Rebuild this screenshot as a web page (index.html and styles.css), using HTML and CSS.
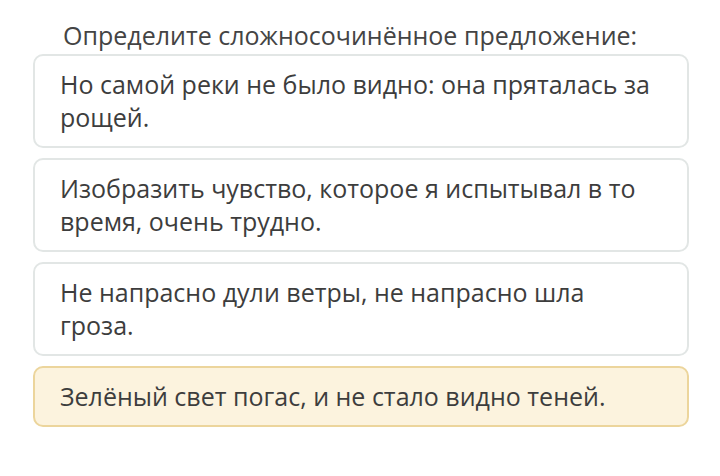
FILE: index.html
```html
<!DOCTYPE html>
<html lang="ru">
<head>
<meta charset="utf-8">
<link rel="stylesheet" href="styles.css">
</head>
<body>
<div class="quiz">
  <div class="question">Определите сложносочинённое предложение:</div>
  <div class="options">
    <div class="option">Но самой реки не было видно: она пряталась за рощей.</div>
    <div class="option">Изобразить чувство, которое я испытывал в то время, очень трудно.</div>
    <div class="option">Не напрасно дули ветры, не напрасно шла гроза.</div>
    <div class="option selected">Зелёный свет погас, и не стало видно теней.</div>
  </div>
</div>
</body>
</html>
```
FILE: styles.css
```css
html, body {
  margin: 0;
  padding: 0;
  background: #ffffff;
}
body {
  width: 720px;
  height: 476px;
  overflow: hidden;
  font-family: "Open Sans", "Noto Sans", sans-serif;
  color: #3d3d3d;
}
.quiz {
  padding: 19px 31px 0 33px;
}
.question {
  font-size: 25px;
  line-height: 33px;
  padding-left: 30px;
  color: #444;
  height: 35px;
}
.options {
  display: flex;
  flex-direction: column;
  gap: 10px;
}
.option {
  border: 2px solid #e2e6e5;
  border-radius: 10px;
  padding: 12px 30px 12px 25px;
  font-size: 25px;
  line-height: 33px;
  background: #fff;
}
.option.selected {
  background: #fcf3de;
  border-color: #ecd59c;
}
```
